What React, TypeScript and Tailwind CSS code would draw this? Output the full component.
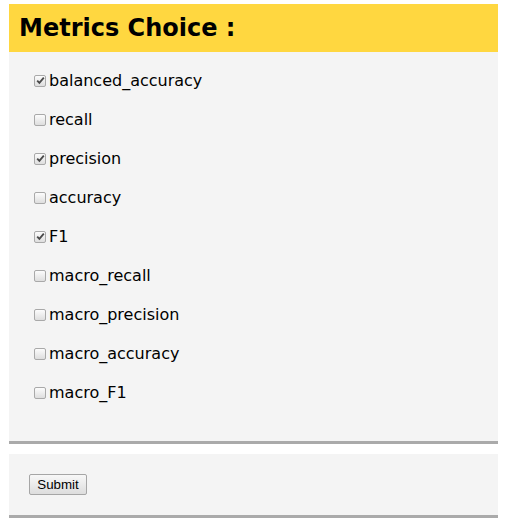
import React from 'react';

const metrics = [
  { name: 'balanced_accuracy', checked: true },
  { name: 'recall', checked: false },
  { name: 'precision', checked: true },
  { name: 'accuracy', checked: false },
  { name: 'F1', checked: true },
  { name: 'macro_recall', checked: false },
  { name: 'macro_precision', checked: false },
  { name: 'macro_accuracy', checked: false },
  { name: 'macro_F1', checked: false },
];

const Box: React.FC<{ checked: boolean }> = ({ checked }) => (
  <span className="w-[12px] h-[12px] shrink-0 rounded-[2px] border border-[#a9a9a9] bg-gradient-to-b from-[#fcfcfc] to-[#dedede] flex items-center justify-center">
    {checked && (
      <svg width="9" height="9" viewBox="0 0 9 9">
        <path d="M1.2 4.6 L3.4 6.9 L7.8 1.6" fill="none" stroke="#4a4a4a" strokeWidth="1.8" />
      </svg>
    )}
  </span>
);

export default function App() {
  return (
    <div className="bg-white min-h-screen px-[9px] pt-[4px] font-['DejaVu_Sans',sans-serif] text-black">
      {/* 指标选择 */}
      <div className="bg-[#f4f4f4] border-b-[3px] border-[#aaaaaa]">
        <h1 className="bg-[#ffd740] h-[48px] pl-[10px] flex items-center text-[24px] font-bold leading-none">
          Metrics Choice :
        </h1>
        <div className="pt-[9px] pb-[29px]">
          {metrics.map(m => (
            <label key={m.name} className="h-[39px] flex items-center pl-[25px] gap-[3px] text-[16px]">
              <Box checked={m.checked} />
              <span>{m.name}</span>
            </label>
          ))}
        </div>
      </div>

      {/* 提交 */}
      <div className="mt-[10px] bg-[#f4f4f4] border-b-[3px] border-[#aaaaaa] h-[64px] pl-[20px] flex items-center">
        <button className="h-[21px] w-[58px] rounded-[2px] border border-[#a6a6a6] bg-gradient-to-b from-[#f8f8f8] to-[#dddddd] font-['Liberation_Sans',sans-serif] text-[13.33px] leading-none text-black">
          Submit
        </button>
      </div>
    </div>
  );
}
